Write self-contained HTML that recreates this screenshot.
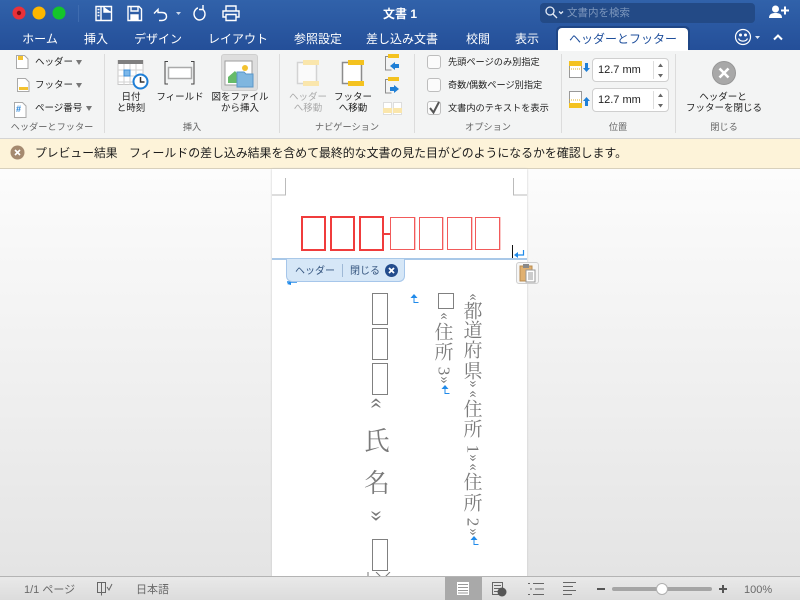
<!DOCTYPE html>
<html lang="ja"><head><meta charset="utf-8"><style>
html,body{margin:0;padding:0;width:800px;height:600px;overflow:hidden;background:#eee}
body{position:relative;font-family:"Liberation Sans","Noto Sans CJK JP",sans-serif;color:#222}
.a,.t,.c,svg.i{position:absolute}
.t{white-space:nowrap;line-height:1}
.c{white-space:nowrap;line-height:1;text-align:center;transform:translateX(-50%)}
.tab{font-size:12px;color:#fff;top:33px}
.g{font-size:9.2px;color:#666;top:123px}
.s{font-size:9.5px;color:#222}
.sep{position:absolute;width:1px;top:54px;height:79px;background:#dcdcdc}
.cb{position:absolute;left:427px;width:12px;height:12px;background:#fbfbfb;border:1px solid #bdbdbd;border-radius:3px}
.sp{position:absolute;left:592px;width:75px;height:22px;background:#fff;border:1px solid #cfcfcf;border-radius:4px;font-size:11px;line-height:23px;text-indent:5px}
.sp:after{content:"";position:absolute;left:60px;top:2px;height:18px;width:1px;background:#ddd}
.v{position:absolute;color:#7a7a7a;font-family:"Liberation Serif","Noto Serif CJK SC",serif;font-size:19px;line-height:1;width:24px;text-align:center;transform:translate(-50%,-46%)}
.r{transform:translate(-50%,-50%) rotate(90deg);font-size:15px;color:#777}
.box{position:absolute;border:1.5px solid #808080;box-sizing:border-box;background:#fff}
.rb{position:absolute;box-sizing:border-box;top:216px;height:35px;border:2px solid #f03c3c}
.rl{top:217px;height:33px;border:1px solid #f25a5a;box-shadow:1px 0 0 #fbc8c8}
.st{font-size:11px;color:#6a6a6a;top:585px}
</style></head><body>

<div class="a" style="left:0;top:0;width:800px;height:50px;background:linear-gradient(#3162aa,#244f99)"></div>
<div class="a" style="left:0;top:50px;width:800px;height:88px;background:#f3f4f4;border-bottom:1px solid #d4d4d4"></div>
<div class="a" style="left:0;top:139px;width:800px;height:29px;background:#fdf3d9;border-bottom:1px solid #d8d0bc"></div>
<div class="a" style="left:0;top:169px;width:800px;height:408px;background:linear-gradient(#fcfcfc,#e4e4e4)"></div>

<!-- traffic lights -->
<svg class="i" style="left:0;top:0" width="80" height="26"><circle cx="19" cy="13" r="6.500" fill="#ea3139"/><circle cx="19" cy="13" r="2.200" fill="#7a0d12"/><circle cx="39" cy="13" r="6.500" fill="#fdb700"/><circle cx="59" cy="13" r="6.500" fill="#14c52b"/><path d="M78.500 5v17" stroke="#3f6cb0"/></svg>
<!-- toolbar icons -->
<svg class="i" style="left:90px;top:0" width="160" height="26" fill="none" stroke="#fff" stroke-width="1.400"><path d="M6 6.500h15.500v14H6z"/><path d="M11 6.500v14M7.500 9.500h2M7.500 12.500h2M7.500 15.500h2"/><path d="M14 7v5h7" fill="#fff"/><path d="M38 6.500h11l2.500 2.500v11.500H38z"/><path d="M41 7v4h7V7"/><path d="M41 20v-5h7v5" fill="#fff"/><path d="M64 13.500l4-4v3h4c3 0 4.500 1.500 4.500 4s-2 4-4.500 4h-3"/><path d="M86 12l5 0-2.500 3z" fill="#c9d6ea" stroke="none"/><path d="M108 8c-1 0-4 2-4 6 0 3 2.500 6 5.500 6s5.500-2.500 5.500-6c0-2-1-3.500-2-4.500"/><path d="M113 5v4.500h-4"/><path d="M136 11v-5h10v5M136 17h-3v-6h16v6h-3M136 14.500h10v6h-10z"/></svg>
<div class="c" style="left:400px;top:8px;font-size:12px;color:#fff;font-weight:bold">文書 1</div>
<div class="a" style="left:540px;top:3px;width:215px;height:20px;background:#234a86;border-radius:4px"></div>
<svg class="i" style="left:543px;top:4px" width="24" height="18" fill="none" stroke="#e4ebf6" stroke-width="1.300"><circle cx="7" cy="7" r="4"/><path d="M10 10l4 4"/><path d="M16 7.500l2 2 2-2"/></svg>
<div class="t" style="left:567px;top:8px;font-size:10.500px;color:#7d97bd">文書内を検索</div>
<svg class="i" style="left:768px;top:4px" width="22" height="17" fill="#fff"><circle cx="7.500" cy="5" r="3.500"/><path d="M1 14c0-4 3-5 6.500-5s6.500 1 6.500 5z"/><path d="M16 2.500h2v3h3v2h-3v3h-2v-3h-3v-2h3z"/></svg>

<!-- tabs -->
<div class="c tab" style="left:40px">ホーム</div>
<div class="c tab" style="left:96px">挿入</div>
<div class="c tab" style="left:158px">デザイン</div>
<div class="c tab" style="left:238px">レイアウト</div>
<div class="c tab" style="left:318px">参照設定</div>
<div class="c tab" style="left:402px">差し込み文書</div>
<div class="c tab" style="left:478px">校閲</div>
<div class="c tab" style="left:527px">表示</div>
<div class="a" style="left:556px;top:26px;width:134px;height:24px;background:#1f4686;border-radius:5px 5px 0 0"></div>
<div class="a" style="left:558px;top:28px;width:130px;height:23px;background:#fff;border-radius:4px 4px 0 0"></div>
<div class="c" style="left:623px;top:33px;font-size:12px;color:#1f4f9c">ヘッダーとフッター</div>
<svg class="i" style="left:732px;top:26px" width="60" height="24" fill="none" stroke="#fff" stroke-width="1.200"><circle cx="11" cy="11" r="7.500"/><circle cx="8.500" cy="9" r=".9" fill="#fff"/><circle cx="13.500" cy="9" r=".9" fill="#fff"/><path d="M6.500 12.500c1.500 3.500 7.500 3.500 9 0"/><path d="M23 10h5l-2.500 3z" fill="#dfe7f3" stroke="none"/><path d="M42 13.500l4-4 4 4" stroke-width="2"/></svg>

<!-- separators -->
<div class="sep" style="left:104px"></div><div class="sep" style="left:279px"></div><div class="sep" style="left:414px"></div><div class="sep" style="left:561px"></div><div class="sep" style="left:675px"></div>

<!-- group 1 -->
<svg class="i" style="left:12px;top:52px" width="20" height="68" fill="#fff" stroke="#a9a9a9"><path d="M4.500 3.500h8l3.500 3.500v9.500H4.500z"/><path d="M6 4h5v4H6z" fill="#f3c230" stroke="none"/><path d="M5.500 26.500h8l3.500 3.500v9.500H5.500z"/><path d="M7 35h9v3H7z" fill="#f3c230" stroke="none"/><path d="M2.500 50.500h8l3.500 3.500v11.500H2.500z"/></svg>
<div class="t" style="left:16px;top:105px;font-size:9px;color:#1f7fd6;font-weight:bold">#</div>
<div class="t s" style="left:35px;top:58px">ヘッダー</div><div class="t s" style="left:35px;top:81px">フッター</div><div class="t s" style="left:35px;top:104px">ページ番号</div>
<svg class="i" style="left:69px;top:57px" width="26" height="58" fill="#777"><path d="M7 3h6l-3 5zM7 26h6l-3 5zM17 49h6l-3 5z"/></svg>
<div class="c g" style="left:52px">ヘッダーとフッター</div>

<!-- group 2 -->
<svg class="i" style="left:116px;top:58px" width="34" height="34"><rect x="2" y="2.500" width="25" height="24" fill="#fff" stroke="#c8c8c8"/><rect x="2" y="2" width="25" height="4" fill="#7f7f7f"/><path d="M2 12h25M2 18h25M2 24h25M8 6v21M14 6v21M20 6v21" stroke="#d2d2d2" fill="none"/><rect x="8" y="12" width="6" height="6" fill="#7db8ea" stroke="#3f8fd8"/><circle cx="24.500" cy="23.500" r="7" fill="#fff" stroke="#1f7fd6" stroke-width="2"/><path d="M24.500 19v5h4" stroke="#333" stroke-width="1.500" fill="none"/></svg>
<svg class="i" style="left:163px;top:60px" width="34" height="26" fill="none"><path d="M5 1.500H2v22.500h3M28 1.500h3v22.500h-3" stroke="#444"/><rect x="5.500" y="7.500" width="23" height="11" fill="#fff" stroke="#aaa" stroke-width="1.500"/></svg>
<div class="a" style="left:221px;top:54px;width:37px;height:37px;background:#dedede;border:1px solid #cfcfcf;border-radius:3px;box-sizing:border-box"></div>
<svg class="i" style="left:224px;top:60px" width="32" height="30"><rect x="1" y="1" width="27" height="24" fill="#fff" stroke="#9d9d9d"/><circle cx="21" cy="8" r="3" fill="#f3c230"/><path d="M4 23v-6l7-6 4 5 4 2v5z" fill="#66bb6a"/><path d="M13 12h7l2 2h7v13H13z" fill="#7fb6df" stroke="#5a97c8"/></svg>
<div class="c s" style="left:131px;top:93px">日付</div><div class="c s" style="left:131px;top:104px">と時刻</div>
<div class="c s" style="left:180px;top:93px">フィールド</div>
<div class="c s" style="left:240px;top:93px">図をファイル</div><div class="c s" style="left:240px;top:104px">から挿入</div>
<div class="c g" style="left:192px">挿入</div>

<!-- group 3 -->
<svg class="i" style="left:295px;top:58px" width="80" height="30" fill="none"><rect x="2.500" y="4.500" width="19" height="21" fill="#fafafa" stroke="#d3d3d3" stroke-width="1.500"/><rect x="8" y="2" width="16" height="5" fill="#fae6ac"/><rect x="8" y="23" width="16" height="5" fill="#fae6ac"/>
<rect x="47.500" y="4.500" width="19" height="21" fill="#fff" stroke="#8c8c8c" stroke-width="1.500"/><rect x="53" y="2" width="16" height="5" fill="#f4c21f"/><rect x="53" y="23" width="16" height="5" fill="#f4c21f"/></svg>
<svg class="i" style="left:383px;top:54px" width="20" height="62" fill="none"><path d="M8 2.500H2.500v13.500h6" stroke="#8c8c8c"/><rect x="5" y="0" width="11" height="4" fill="#f4c21f"/><path d="M7 12l5-4v2h4v4h-4v2z" fill="#1f7fd6"/>
<path d="M8 25.500H2.500v13.500h6" stroke="#8c8c8c"/><rect x="5" y="23" width="11" height="4" fill="#f4c21f"/><path d="M16 35l-5-4v2H7v4h4v2z" fill="#1f7fd6"/>
<rect x=".5" y="48.500" width="8" height="12" fill="#fff" stroke="#ddd"/><rect x="10.500" y="48.500" width="8" height="12" fill="#fff" stroke="#ddd"/><rect x="0" y="54" width="9" height="5" fill="#fae6ac"/><rect x="10" y="54" width="9" height="5" fill="#fae6ac"/></svg>
<div class="c s" style="left:308px;top:93px;color:#aaa">ヘッダー</div><div class="c s" style="left:308px;top:104px;color:#aaa">へ移動</div>
<div class="c s" style="left:353px;top:93px">フッター</div><div class="c s" style="left:353px;top:104px">へ移動</div>
<div class="c g" style="left:347px">ナビゲーション</div>

<!-- group 4 -->
<div class="cb" style="top:55px"></div><div class="cb" style="top:78px"></div><div class="cb" style="top:101px"></div>
<svg class="i" style="left:426px;top:99px" width="18" height="18" fill="none"><path d="M4 9l3.500 4.500L13 3" stroke="#555" stroke-width="2"/></svg>
<div class="t" style="left:448px;top:58px;font-size:9.200px">先頭ページのみ別指定</div>
<div class="t" style="left:448px;top:81px;font-size:9.200px">奇数/偶数ページ別指定</div>
<div class="t" style="left:448px;top:104px;font-size:9.200px">文書内のテキストを表示</div>
<div class="c g" style="left:488px">オプション</div>

<!-- group 5 -->
<svg class="i" style="left:568px;top:60px" width="22" height="50"><rect x="1.500" y="1.500" width="12" height="16" fill="#fff" stroke="#999"/><rect x="1" y="1" width="13" height="5" fill="#f4c21f"/><path d="M1 9h13" stroke="#e0b020" stroke-dasharray="1 1"/><path d="M17 3h3v5h2l-3.500 4-3.500-4h2z" fill="#1f7fd6"/><rect x="1.500" y="31.500" width="12" height="16" fill="#fff" stroke="#999"/><rect x="1" y="43" width="13" height="5" fill="#f4c21f"/><path d="M1 40h13" stroke="#e0b020" stroke-dasharray="1 1"/><path d="M17 46h3v-5h2l-3.500-4-3.500 4h2z" fill="#1f7fd6"/></svg>
<div class="sp" style="top:58px">12.7 mm</div><div class="sp" style="top:88px">12.7 mm</div>
<svg class="i" style="left:655px;top:62px" width="12" height="48" fill="#666"><path d="M3 5l2.500-3.500L8 5zM3 12l2.500 3.500L8 12zM3 35l2.500-3.500L8 35zM3 42l2.500 3.500L8 42z"/></svg>
<div class="c g" style="left:618px">位置</div>

<!-- group 6 -->
<svg class="i" style="left:712px;top:61px" width="25" height="25"><circle cx="12" cy="12" r="11.500" fill="#a8a8a8" stroke="#969696"/><path d="M7.500 7.500l9 9M16.500 7.500l-9 9" stroke="#fff" stroke-width="2.600"/></svg>
<div class="c s" style="left:723px;top:93px">ヘッダーと</div><div class="c s" style="left:724px;top:104px">フッターを閉じる</div>
<div class="c g" style="left:724px">閉じる</div>

<!-- message bar -->
<svg class="i" style="left:10px;top:145px" width="16" height="15"><circle cx="7.500" cy="7.500" r="7" fill="#a58a70"/><path d="M5 5l5 5M10 5l-5 5" stroke="#fff" stroke-width="1.600"/></svg>
<div class="t" style="left:35px;top:148px;font-size:11.800px;color:#1c1c1c">プレビュー結果</div>
<div class="t" style="left:129px;top:148px;font-size:11.900px;color:#1c1c1c">フィールドの差し込み結果を含めて最終的な文書の見た目がどのようになるかを確認します。</div>

<!-- page -->
<div class="a" style="left:272px;top:169px;width:255px;height:408px;background:#fff;box-shadow:0 0 2px #c4c4c4"></div>
<svg class="i" style="left:272px;top:175px" width="256" height="24" fill="none" stroke="#bbb"><path d="M13.500 3v17H0M241.500 3v17H255"/></svg>
<div class="rb" style="left:301px;width:25px"></div><div class="rb" style="left:330px;width:25px"></div><div class="rb" style="left:359px;width:25px"></div>
<div class="a" style="left:384px;top:233px;width:6px;height:2px;background:#ee3f3f"></div>
<div class="rb rl" style="left:390px;width:25px"></div><div class="rb rl" style="left:419px;width:24px"></div><div class="rb rl" style="left:447px;width:25px"></div><div class="rb rl" style="left:475px;width:25px"></div>
<div class="a" style="left:512px;top:245px;width:1px;height:13px;background:#111"></div>
<svg class="i" style="left:513px;top:249px" width="13" height="10" fill="none"><path d="M10.500 1v5H4" stroke="#1f8aea" stroke-width="1.200"/><path d="M1 6l4-3v6z" fill="#1f8aea"/></svg>
<div class="a" style="left:272px;top:258px;width:255px;height:2px;background:#a9c8e8"></div>
<svg class="i" style="left:286px;top:278px" width="12" height="8"><path d="M1 4h10" stroke="#1f8aea" stroke-width="1.500"/><path d="M1 6l4-3v4z" fill="#1f8aea"/></svg>
<div class="a" style="left:286px;top:259px;width:119px;height:23px;box-sizing:border-box;background:#d6e7f7;border:1px solid #a6c6ea;border-top:0;border-radius:0 0 6px 6px"></div>
<div class="t" style="left:295px;top:267px;font-size:10px;color:#35557f">ヘッダー</div>
<div class="a" style="left:342px;top:264px;width:1px;height:13px;background:#9fb9d6"></div>
<div class="t" style="left:350px;top:267px;font-size:10px;color:#35557f">閉じる</div>
<svg class="i" style="left:384px;top:263px" width="15" height="15"><circle cx="7.500" cy="7.500" r="6.500" fill="#234c8c"/><path d="M5 5l5 5M10 5l-5 5" stroke="#fff" stroke-width="1.800"/></svg>
<div class="a" style="left:516px;top:262px;width:23px;height:22px;box-sizing:border-box;background:#f6f6f6;border:1px solid #cfcfcf;border-radius:3px"></div>
<svg class="i" style="left:519px;top:264px" width="18" height="19"><rect x="1" y="2" width="12" height="15" fill="#e0b070" stroke="#b98c50"/><rect x="4" y="0" width="6" height="4" fill="#888"/><rect x="7" y="6" width="9" height="12" fill="#fff" stroke="#999"/><path d="M9 9h5M9 11h5M9 13h5M9 15h5" stroke="#999"/></svg>

<!-- vertical merge fields -->
<div class="v r" style="left:473px;top:297px">«</div><div class="v" style="left:473px;top:311px">都</div><div class="v" style="left:473px;top:330px">道</div><div class="v" style="left:473px;top:350px">府</div><div class="v" style="left:473px;top:371px">県</div><div class="v r" style="left:473px;top:384px">»</div><div class="v r" style="left:473px;top:394px">«</div><div class="v" style="left:473px;top:409px">住</div><div class="v" style="left:473px;top:429px">所</div><div class="v" style="left:473px;top:449px;transform:translate(-50%,-50%) rotate(90deg);font-size:17px">1</div><div class="v r" style="left:473px;top:458px">»</div><div class="v r" style="left:473px;top:467px">«</div><div class="v" style="left:473px;top:482px">住</div><div class="v" style="left:473px;top:503px">所</div><div class="v" style="left:473px;top:522px;transform:translate(-50%,-50%) rotate(90deg);font-size:17px">2</div><div class="v r" style="left:473px;top:532px">»</div>
<div class="box" style="left:438px;top:293px;width:16px;height:16px"></div>
<div class="v r" style="left:444px;top:316px">«</div><div class="v" style="left:444px;top:332px">住</div><div class="v" style="left:444px;top:352px">所</div><div class="v" style="left:444px;top:371px;transform:translate(-50%,-50%) rotate(90deg);font-size:17px">3</div><div class="v r" style="left:444px;top:380px">»</div>
<div class="box" style="left:372px;top:293px;width:16px;height:32px"></div><div class="box" style="left:372px;top:328px;width:16px;height:32px"></div><div class="box" style="left:372px;top:363px;width:16px;height:32px"></div>
<div class="v r" style="left:378px;top:403px;font-size:23px">«</div><div class="v" style="left:377px;top:441px;font-size:26px;width:32px">氏</div><div class="v" style="left:377px;top:483px;font-size:26px;width:32px">名</div><div class="v r" style="left:378px;top:516px;font-size:23px">»</div>
<div class="box" style="left:372px;top:539px;width:16px;height:32px"></div>
<svg class="i" style="left:360px;top:572px" width="40" height="5" fill="none" stroke="#777"><path d="M8 0v5M16 0l5 5M30 0l-5 5"/></svg>
<svg class="i" style="left:408px;top:290px" width="80" height="260" fill="none"><path d="M6 7v5.500h4.500" stroke="#1f8aea"/><path d="M2.500 8l3.500-4 3.500 4z" fill="#1f8aea"/><path d="M37 98v5.500h4.500" stroke="#1f8aea"/><path d="M33.500 99l3.500-4 3.500 4z" fill="#1f8aea"/><path d="M66 249v5.500h4.500" stroke="#1f8aea"/><path d="M62.500 250l3.500-4 3.500 4z" fill="#1f8aea"/></svg>

<!-- status bar -->
<div class="a" style="left:0;top:576px;width:800px;height:24px;box-sizing:border-box;background:linear-gradient(#e9e9e9,#dcdcdc);border-top:1px solid #b4b4b4"></div>
<div class="t st" style="left:24px">1/1 ページ</div>
<svg class="i" style="left:95px;top:581px" width="20" height="16" fill="none" stroke="#666"><path d="M2.500 1.500h8v10h-8zM6.500 1.500v13"/><path d="M12 6l2 3 3-6"/></svg>
<div class="t st" style="left:136px">日本語</div>
<div class="a" style="left:445px;top:577px;width:37px;height:23px;background:#a9a9a9"></div>
<svg class="i" style="left:450px;top:577px" width="150" height="23" fill="none"><rect x="7" y="5" width="12" height="13" fill="#fff"/><path d="M8 7.500h10M8 10.500h10M8 13.500h10M8 16h10" stroke="#999"/><path d="M42.500 5.500h10v12h-10zM44 8.500h7M44 11.500h7M44 14.500h4" stroke="#666"/><circle cx="52" cy="15" r="4.500" fill="#555"/><path d="M78 6.500h2M83 6.500h11M80 12h2M85 12h9M78 17.500h2M83 17.500h11" stroke="#666"/><path d="M113 5.500h13M113 9.500h10M113 13.500h13M113 17.500h9" stroke="#666"/></svg>
<div class="a" style="left:597px;top:588px;width:8px;height:2px;background:#555"></div>
<div class="a" style="left:612px;top:587px;width:100px;height:4px;background:#a5a5a5;border-radius:2px"></div>
<div class="a" style="left:656px;top:583px;width:12px;height:12px;box-sizing:border-box;background:#fff;border:1px solid #b0b0b0;border-radius:50%"></div>
<svg class="i" style="left:718px;top:584px" width="10" height="10"><path d="M1 5h8M5 1v8" stroke="#555" stroke-width="2"/></svg>
<div class="t st" style="left:744px">100%</div>
</body></html>
